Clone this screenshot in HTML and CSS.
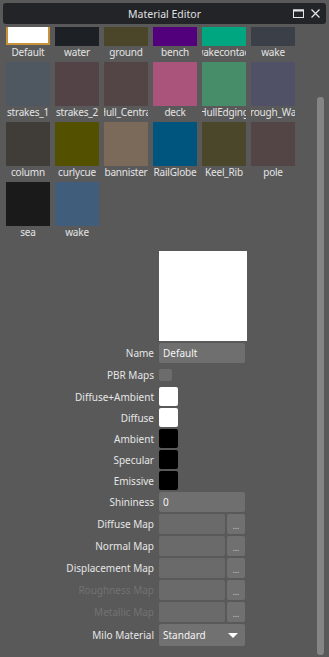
FILE: index.html
```html
<!DOCTYPE html>
<html lang="en">
<head>
    <meta charset="UTF-8">
    <meta name="viewport" content="width=device-width, initial-scale=1.0">
    <title>Material Editor</title>
    <link rel="stylesheet" href="styles.css">
</head>
<body>
    <div class="titlebar">
        <span></span>
        <span class="title">Material Editor</span>
        <div class="title-buttons">
            <svg width="11" height="9" viewBox="0 0 11 9"><rect x="0.5" y="1" width="10" height="7.5" fill="none" stroke="#e6e6e6" stroke-width="1"/><rect x="0" y="0.5" width="11" height="2" fill="#e6e6e6"/></svg>
            <svg width="9" height="9" viewBox="0 0 9 9"><path d="M0.5 0.5 L8.5 8.5 M8.5 0.5 L0.5 8.5" stroke="#e6e6e6" stroke-width="1.2"/></svg>
        </div>
    </div>

    <div class="panel">
        <div class="scroll-area">
            <div class="swatch-grid">
                <div class="cell selected"><div class="chip" style="background:#ffffff"></div><div class="name"><span>Default</span></div></div>
                <div class="cell"><div class="chip" style="background:#1d2125"></div><div class="name"><span>water</span></div></div>
                <div class="cell"><div class="chip" style="background:#4b4629"></div><div class="name"><span>ground</span></div></div>
                <div class="cell"><div class="chip" style="background:#52007b"></div><div class="name"><span>bench</span></div></div>
                <div class="cell"><div class="chip" style="background:#00a67f"></div><div class="name"><span>wakecontact</span></div></div>
                <div class="cell"><div class="chip" style="background:#3b4048"></div><div class="name"><span>wake</span></div></div>

                <div class="cell"><div class="chip" style="background:#4f5761"></div><div class="name"><span>strakes_1</span></div></div>
                <div class="cell"><div class="chip" style="background:#534347"></div><div class="name"><span>strakes_2</span></div></div>
                <div class="cell"><div class="chip" style="background:#534546"></div><div class="name"><span>Hull_Central</span></div></div>
                <div class="cell"><div class="chip" style="background:#ab547b"></div><div class="name"><span>deck</span></div></div>
                <div class="cell"><div class="chip" style="background:#478d6a"></div><div class="name"><span>HullEdging</span></div></div>
                <div class="cell"><div class="chip" style="background:#505166"></div><div class="name"><span>Trough_Wall</span></div></div>

                <div class="cell"><div class="chip" style="background:#403d39"></div><div class="name"><span>column</span></div></div>
                <div class="cell"><div class="chip" style="background:#535000"></div><div class="name"><span>curlycue</span></div></div>
                <div class="cell"><div class="chip" style="background:#7b6a59"></div><div class="name"><span>bannister</span></div></div>
                <div class="cell"><div class="chip" style="background:#00557e"></div><div class="name"><span>RailGlobe</span></div></div>
                <div class="cell"><div class="chip" style="background:#4a472b"></div><div class="name"><span>Keel_Rib</span></div></div>
                <div class="cell"><div class="chip" style="background:#534546"></div><div class="name"><span>pole</span></div></div>

                <div class="cell"><div class="chip" style="background:#1a1a1a"></div><div class="name"><span>sea</span></div></div>
                <div class="cell"><div class="chip" style="background:#405e7c"></div><div class="name"><span>wake</span></div></div>
            </div>

            <div class="form">
                <div class="row preview-row">
                    <span></span>
                    <div class="preview"></div>
                </div>
                <div class="row">
                    <label>Name</label>
                    <div class="field">Default</div>
                </div>
                <div class="row">
                    <label>PBR Maps</label>
                    <div class="checkbox"></div>
                </div>
                <div class="row color-row">
                    <label>Diffuse+Ambient</label>
                    <div class="color white"></div>
                </div>
                <div class="row color-row">
                    <label>Diffuse</label>
                    <div class="color white"></div>
                </div>
                <div class="row color-row">
                    <label>Ambient</label>
                    <div class="color black"></div>
                </div>
                <div class="row color-row">
                    <label>Specular</label>
                    <div class="color black"></div>
                </div>
                <div class="row color-row">
                    <label>Emissive</label>
                    <div class="color black"></div>
                </div>
                <div class="row">
                    <label>Shininess</label>
                    <div class="field">0</div>
                </div>
                <div class="row">
                    <label>Diffuse Map</label>
                    <div class="map-field"><div class="map-input"></div><div class="browse">...</div></div>
                </div>
                <div class="row">
                    <label>Normal Map</label>
                    <div class="map-field"><div class="map-input"></div><div class="browse">...</div></div>
                </div>
                <div class="row">
                    <label>Displacement Map</label>
                    <div class="map-field"><div class="map-input"></div><div class="browse">...</div></div>
                </div>
                <div class="row disabled">
                    <label>Roughness Map</label>
                    <div class="map-field"><div class="map-input"></div><div class="browse">...</div></div>
                </div>
                <div class="row disabled">
                    <label>Metallic Map</label>
                    <div class="map-field"><div class="map-input"></div><div class="browse">...</div></div>
                </div>
                <div class="row select-row">
                    <label>Milo Material</label>
                    <div class="select"><span>Standard</span><span class="arrow"></span></div>
                </div>
            </div>
        </div>
        <div class="scrollbar"><div class="thumb"></div></div>
    </div>
</body>
</html>
```

FILE: styles.css
```css
body {
    margin: 0;
    width: 329px;
    height: 657px;
    overflow: hidden;
    background: #595959;
    font-family: 'Noto Sans', 'Open Sans', sans-serif;
    font-size: 10px;
    color: #e6e6e6;
}
.titlebar {
    margin: 3px 3px 0 3px;
    height: 21px;
    background: #222428;
    border-radius: 3px;
    display: grid;
    grid-template-columns: 1fr auto 1fr;
    align-items: center;
}
.title {
    font-size: 10.5px;
    color: #e0e0e0;
}
.title-buttons {
    justify-self: end;
    display: flex;
    align-items: center;
    gap: 7px;
    padding-right: 6px;
}
.title-buttons svg {
    display: block;
}
.panel {
    margin-top: 3px;
    height: 630px;
    display: flex;
}
.scroll-area {
    width: 316px;
    overflow: hidden;
}
.swatch-grid {
    margin-top: -25px;
    padding-left: 6px;
    display: grid;
    grid-template-columns: repeat(6, 44px);
    column-gap: 5px;
    row-gap: 3px;
}
.chip {
    height: 44px;
    box-sizing: border-box;
}
.cell.selected .chip {
    height: 43px;
    border: 2px solid #c8913b;
}
.cell.selected .name {
    margin-top: 0;
}
.name {
    display: flex;
    justify-content: center;
    overflow: hidden;
    white-space: nowrap;
    line-height: 14px;
    margin-top: -1px;
    letter-spacing: -0.2px;
    color: #e4e4e4;
}
.form {
    margin-top: 12px;
    display: flex;
    flex-direction: column;
    gap: 2px;
}
.row {
    display: grid;
    grid-template-columns: 154px 86px;
    column-gap: 5px;
    align-items: center;
    height: 20px;
}
.row label {
    text-align: right;
    white-space: nowrap;
}
.row.disabled label {
    color: #727272;
}
.preview-row {
    height: 90px;
}
.preview {
    width: 88px;
    height: 90px;
    background: #ffffff;
}
.color-row {
    height: 19px;
}
.color {
    width: 19px;
    height: 19px;
    border-radius: 2px;
}
.color.white {
    background: #ffffff;
}
.color.black {
    background: #000000;
}
.checkbox {
    width: 13px;
    height: 12px;
    border-radius: 2px;
    background: #6c6c6c;
}
.field {
    height: 20px;
    line-height: 20px;
    padding-left: 4px;
    background: #6f6f6f;
    border-radius: 2px;
    color: #f4f4f4;
}
.map-field {
    display: flex;
    gap: 2px;
    height: 20px;
}
.map-input {
    width: 66px;
    background: #6a6a6a;
    border-radius: 2px;
}
.browse {
    width: 18px;
    background: #707070;
    border-radius: 2px;
    text-align: center;
    font-size: 8px;
    line-height: 24px;
    color: #d0d0d0;
}
.select-row {
    height: 22px;
}
.select {
    height: 22px;
    background: #717171;
    border-radius: 2px;
    display: flex;
    align-items: center;
    justify-content: space-between;
    padding: 0 7px 0 4px;
    color: #f4f4f4;
}
.arrow {
    width: 0;
    height: 0;
    border-left: 5px solid transparent;
    border-right: 5px solid transparent;
    border-top: 5px solid #ffffff;
}
.scrollbar {
    width: 7px;
    margin-left: 1px;
}
.thumb {
    margin-top: 70px;
    height: 558px;
    background: #858585;
    border-radius: 3px;
}
```
